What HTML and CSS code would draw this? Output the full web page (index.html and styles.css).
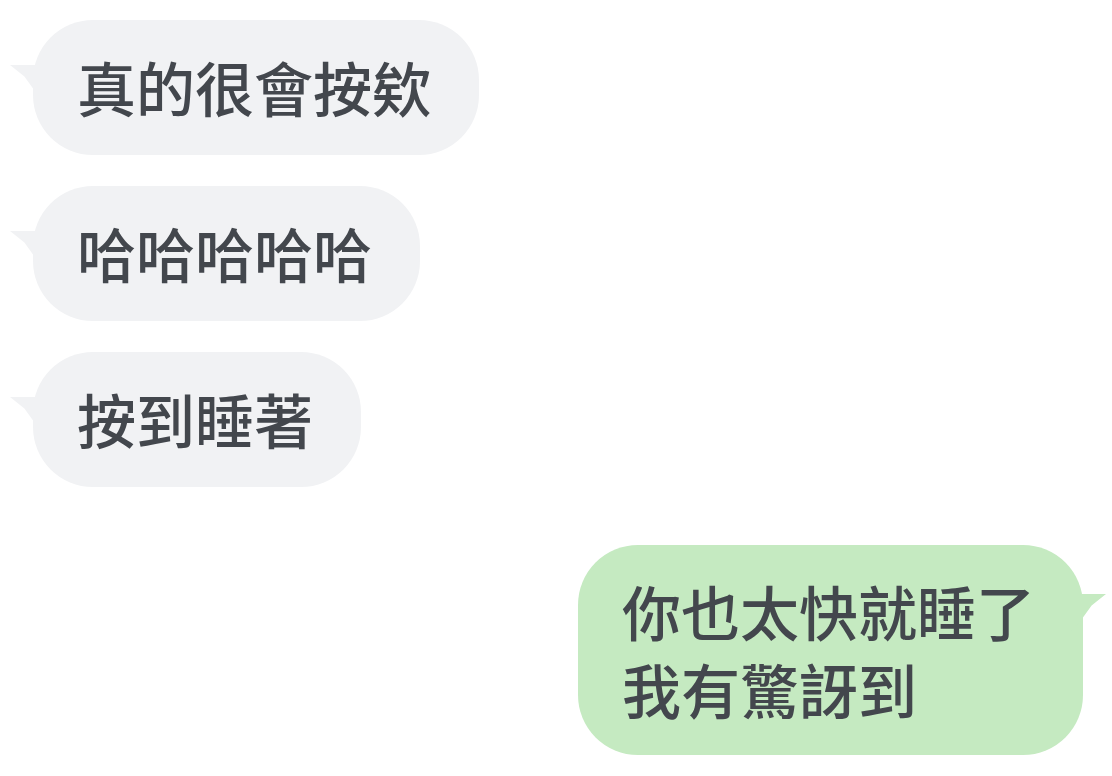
FILE: index.html
```html
<!DOCTYPE html>
<html lang="zh-Hant">

<head>
    <meta charset="UTF-8">
    <meta name="viewport" content="width=device-width, initial-scale=1.0">
    <title>聊天</title>
    <link rel="stylesheet" href="styles.css">
</head>

<body>
    <div class="chat">
        <div class="burbuja recibida">真的很會按欸</div>
        <div class="burbuja recibida">哈哈哈哈哈</div>
        <div class="burbuja recibida">按到睡著</div>
        <div class="burbuja enviada">你也太快就睡了<br>我有驚訝到</div>
    </div>
</body>

</html>
```

FILE: styles.css
```css
* {
    margin: 0;
    padding: 0;
    box-sizing: border-box;
}

body {
    background: #ffffff;
    font-family: "Noto Sans CJK TC", "Noto Sans", sans-serif;
    width: 1112px;
    height: 776px;
    overflow: hidden;
}

.chat {
    display: flex;
    flex-direction: column;
    align-items: flex-start;
    gap: 31px;
    padding: 20px 29px 0 33px;
}

.burbuja {
    position: relative;
    font-size: 59px;
    font-weight: 500;
    line-height: 78px;
    color: #43474d;
    padding: 28px 48px 29px 44px;
    border-radius: 60px;
}

/* colita del globo */
.burbuja::before {
    content: "";
    position: absolute;
    top: 45px;
    width: 36px;
    height: 38px;
}

.recibida {
    background-color: #f1f2f4;
}

.recibida::before {
    left: -23px;
    background-color: #f1f2f4;
    clip-path: polygon(0 0, 100% 0, 100% 100%, 70% 70%, 40% 30%);
}

.enviada {
    align-self: flex-end;
    margin-top: 27px;
    background-color: #c5eac1;
    padding: 27px 48px 27px 44px;
}

.enviada::before {
    top: 49px;
    right: -23px;
    background-color: #c5eac1;
    clip-path: polygon(0 0, 100% 0, 60% 30%, 30% 70%, 0 100%);
}
```
